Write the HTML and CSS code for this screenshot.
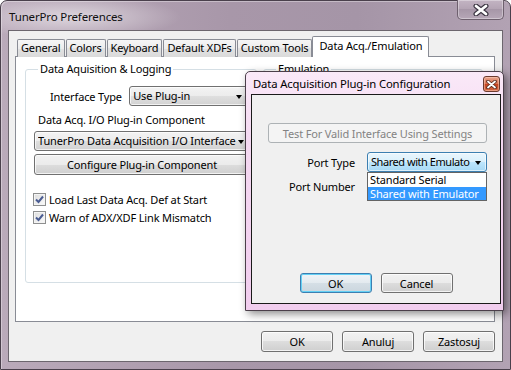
FILE: index.html
```html
<!doctype html>
<html lang="en">
<head>
  <meta charset="UTF-8">
  <title>TunerPro Preferences</title>
  <link rel="stylesheet" href="styles.css">
</head>
<body>
  <div class="window">
    <div class="titlebar">
      <span class="title">TunerPro Preferences</span>
      <div class="close-btn">
        <svg width="16" height="12" viewBox="0 0 16 12">
          <path d="M3 2 L13 10 M13 2 L3 10" stroke="#3a3440" stroke-width="5" stroke-linecap="round"/>
          <path d="M3 2 L13 10 M13 2 L3 10" stroke="#fff" stroke-width="2.8" stroke-linecap="round"/>
        </svg>
      </div>
    </div>

    <div class="client">
      <div class="tabs">
        <div class="tab">General</div>
        <div class="tab">Colors</div>
        <div class="tab">Keyboard</div>
        <div class="tab">Default XDFs</div>
        <div class="tab">Custom Tools</div>
        <div class="tab active">Data Acq./Emulation</div>
      </div>

      <div class="panel">
        <fieldset class="group group-left">
          <legend>Data Aquisition &amp; Logging</legend>
          <div class="field-row">
            <span class="field-label">Interface Type</span>
            <div class="combo combo-type"><span class="combo-text">Use Plug-in</span><span class="arrow"></span></div>
          </div>
          <div class="caption">Data Acq. I/O Plug-in Component</div>
          <div class="combo combo-wide"><span class="combo-text">TunerPro Data Acquisition I/O Interface</span><span class="arrow"></span></div>
          <div class="btn btn-wide">Configure Plug-in Component</div>
          <div class="check first">
            <span class="box"><svg width="11" height="11" viewBox="0 0 11 11"><path d="M2 5.5 L4.5 8 L9 2.5" fill="none" stroke="#4a5c92" stroke-width="2"/></svg></span>
            <span>Load Last Data Acq. Def at Start</span>
          </div>
          <div class="check">
            <span class="box"><svg width="11" height="11" viewBox="0 0 11 11"><path d="M2 5.5 L4.5 8 L9 2.5" fill="none" stroke="#4a5c92" stroke-width="2"/></svg></span>
            <span>Warn of ADX/XDF Link Mismatch</span>
          </div>
        </fieldset>
        <fieldset class="group group-right">
          <legend>Emulation</legend>
        </fieldset>
      </div>

      <div class="buttons">
        <div class="btn">OK</div>
        <div class="btn">Anuluj</div>
        <div class="btn">Zastosuj</div>
      </div>
    </div>

    <div class="dialog">
      <div class="dialog-title">
        <span>Data Acquisition Plug-in Configuration</span>
        <div class="dialog-close">
          <svg width="11" height="9" viewBox="0 0 11 9">
            <path d="M2 1.5 L9 7.5 M9 1.5 L2 7.5" stroke="#5a2a1e" stroke-width="3.6" stroke-linecap="round"/>
            <path d="M2 1.5 L9 7.5 M9 1.5 L2 7.5" stroke="#fff" stroke-width="1.8" stroke-linecap="round"/>
          </svg>
        </div>
      </div>
      <div class="dialog-body">
        <div class="btn btn-disabled btn-test">Test For Valid Interface Using Settings</div>
        <div class="port-row">
          <span class="port-label">Port Type</span>
          <div class="combo combo-hot">
            <span class="combo-text">Shared with Emulato</span><span class="arrow"></span>
            <div class="dropdown-list">
              <div class="list-item">Standard Serial</div>
              <div class="list-item selected">Shared with Emulator</div>
            </div>
          </div>
        </div>
        <div class="port-row second">
          <span class="port-label">Port Number</span>
        </div>
        <div class="dialog-buttons">
          <div class="btn btn-default">OK</div>
          <div class="btn">Cancel</div>
        </div>
      </div>
    </div>
  </div>
</body>
</html>
```

FILE: styles.css
```css
* {
  margin: 0;
  padding: 0;
  box-sizing: border-box;
}
body {
  font-family: 'Noto Sans', sans-serif;
  font-size: 11px;
  letter-spacing: -0.15px;
  color: #000;
  background: #fff;
}
.window {
  position: relative;
  width: 511px;
  height: 370px;
  border: 1px solid #4a404c;
  border-radius: 7px 7px 0 0;
  padding: 0 7px 7px 7px;
  display: flex;
  flex-direction: column;
  background:
    radial-gradient(ellipse 110px 22px at 70px 16px, rgba(255,255,255,0.55), rgba(255,255,255,0) 100%),
    linear-gradient(to right, #baaaba, #a897a9 45%, #a595a7 70%, #b2a2b3);
  box-shadow: inset 1px 1px 0 rgba(255,255,255,0.35);
}
.titlebar {
  height: 29px;
  position: relative;
  display: flex;
  align-items: center;
  padding-left: 1px;
  padding-top: 2px;
}
.title {
  color: #101010;
  font-size: 11.5px;
}
.close-btn {
  position: absolute;
  top: -1px;
  right: -1px;
  width: 47px;
  height: 20px;
  border: 1px solid #6e606e;
  border-top: none;
  border-radius: 0 0 5px 5px;
  background: linear-gradient(#c3b4c3, #b3a3b3 50%, #a797a8 50%, #b6a7b7);
  box-shadow: inset 0 0 0 1px rgba(255,255,255,0.35);
  display: flex;
  justify-content: center;
  align-items: center;
}
.client {
  flex: 1;
  background: #f0f0f0;
  border: 1px solid #6c666e;
  padding: 6px 7px 0 6px;
  display: flex;
  flex-direction: column;
}
.tabs {
  display: flex;
  align-items: flex-end;
  height: 20px;
  padding-left: 2px;
  margin-bottom: -1px;
  position: relative;
  z-index: 1;
}
.tab {
  height: 18px;
  line-height: 16px;
  padding: 0 3px;
  margin-right: 1px;
  border: 1px solid #898c95;
  border-bottom: none;
  border-radius: 2px 2px 0 0;
  background: linear-gradient(#f6f6f6, #ececec 50%, #e2e2e2 50%, #dadada);
  white-space: nowrap;
}
.tab.active {
  height: 21px;
  line-height: 18px;
  margin-left: -1px;
  padding: 0 6px;
  background: #fff;
}
.panel {
  height: 266px;
  background: #fff;
  border: 1px solid #898c95;
  padding: 4px 0 0 9px;
  display: flex;
  align-items: flex-start;
  gap: 6px;
}
.group {
  border: 1px solid #d5dfe5;
  border-radius: 3px;
  min-width: 0;
  height: 222px;
  padding: 0 8px;
}
.group legend {
  margin-left: 4px;
  padding: 0 2px;
  line-height: 16px;
}
.group-left {
  width: 232px;
}
.group-right {
  width: 220px;
}
.field-row {
  display: flex;
  align-items: center;
  margin-top: 9px;
}
.field-label {
  width: 80px;
  margin-left: 16px;
  white-space: nowrap;
}
.combo {
  position: relative;
  height: 20px;
  border: 1px solid #707070;
  border-radius: 3px;
  background: linear-gradient(#f3f3f3, #ececec 50%, #dfdfdf 50%, #d2d2d2);
  box-shadow: inset 0 0 0 1px rgba(255,255,255,0.7);
  display: flex;
  align-items: center;
  padding-left: 3px;
}
.combo-text {
  white-space: nowrap;
  overflow: hidden;
  line-height: 16px;
}
.arrow {
  position: absolute;
  right: 5px;
  top: 8px;
  width: 0;
  height: 0;
  border-left: 3.5px solid transparent;
  border-right: 3.5px solid transparent;
  border-top: 4px solid #000;
}
.combo-type {
  width: 120px;
}
.caption {
  margin: 6px 0 0 4px;
  line-height: 16px;
}
.combo-wide {
  width: 216px;
  margin-top: 3px;
}
.combo-wide .combo-text {
  width: 200px;
}
.btn {
  height: 21px;
  border: 1px solid #707070;
  border-radius: 3px;
  background: linear-gradient(#f2f2f2, #ebebeb 50%, #dddddd 50%, #cfcfcf);
  box-shadow: inset 0 0 0 1px rgba(255,255,255,0.75);
  display: flex;
  align-items: center;
  justify-content: center;
  white-space: nowrap;
}
.btn-wide {
  width: 216px;
  margin-top: 3px;
}
.check {
  display: flex;
  align-items: center;
  height: 16px;
  margin-top: 2px;
  margin-left: -1px;
  gap: 3px;
}
.check.first {
  margin-top: 16px;
}
.box {
  width: 13px;
  height: 13px;
  border: 1px solid #8e8f8f;
  background: linear-gradient(135deg, #dcdcdc, #fbfbfb);
  box-shadow: inset 0 0 0 1px #f4f4f4;
  display: flex;
  align-items: center;
  justify-content: center;
}
.buttons {
  display: flex;
  justify-content: flex-end;
  gap: 9px;
  margin-top: 9px;
}
.buttons .btn {
  width: 72px;
}

/* floating dialog */
.dialog {
  position: absolute;
  left: 244px;
  top: 70px;
  width: 259px;
  height: 240px;
  border: 1px solid #4b3f4a;
  border-radius: 5px 5px 0 0;
  padding: 0 2px 6px 5px;
  background: linear-gradient(#fae9f8, #f4d8f1 30%, #f1cdee);
  box-shadow: 3px 3px 8px rgba(0,0,0,0.45);
  display: flex;
  flex-direction: column;
}
.dialog-title {
  height: 22px;
  position: relative;
  display: flex;
  align-items: center;
  padding-left: 2px;
  font-size: 11.3px;
}
.dialog-close {
  position: absolute;
  right: 1px;
  top: 4px;
  width: 17px;
  height: 16px;
  border: 1px solid #6b3a2f;
  border-radius: 3px;
  background: linear-gradient(#e9a58f, #d9704f 50%, #c4411d 50%, #d36a46);
  box-shadow: inset 0 0 0 1px rgba(255,210,190,0.5);
  display: flex;
  align-items: center;
  justify-content: center;
}
.dialog-body {
  flex: 1;
  background: #f0f0f0;
  border: 1px solid #1a1a1a;
  display: flex;
  flex-direction: column;
  padding: 28px 0 10px 16px;
}
.btn-test {
  width: 219px;
  height: 20px;
}
.btn-disabled {
  border-color: #adb2b5;
  background: #f4f4f4;
  box-shadow: none;
  color: #838383;
}
.port-row {
  display: flex;
  align-items: center;
  margin-top: 9px;
}
.port-row.second {
  margin-top: 6px;
  height: 16px;
}
.port-label {
  width: 87px;
  text-align: right;
  margin-right: 12px;
  white-space: nowrap;
}
.combo-hot {
  width: 120px;
  border-color: #3c7fb1;
  background: linear-gradient(#eaf6fd, #d9f0fc 50%, #bee6fd 50%, #a7d9f5);
  box-shadow: inset 0 0 0 1px rgba(255,255,255,0.6);
}
.combo-hot .combo-text {
  letter-spacing: -0.45px;
}
.dropdown-list {
  position: absolute;
  left: -1px;
  top: 19px;
  width: 120px;
  background: #fff;
  border: 1px solid #646464;
  z-index: 2;
}
.list-item {
  height: 13.5px;
  line-height: 13.5px;
  padding-left: 2px;
  white-space: nowrap;
}
.list-item.selected {
  background: #3399ff;
  color: #fff;
}
.dialog-buttons {
  margin-top: auto;
  display: flex;
  justify-content: center;
  gap: 9px;
  margin-left: -16px;
}
.dialog-buttons .btn {
  width: 72px;
  height: 20px;
}
.btn-default {
  border-color: #3c7fb1;
  background: linear-gradient(#f0f4f7, #e3eaef 50%, #d5dfe6 50%, #cbd6de);
  box-shadow: inset 0 0 0 1px #64d0f5;
}
```
